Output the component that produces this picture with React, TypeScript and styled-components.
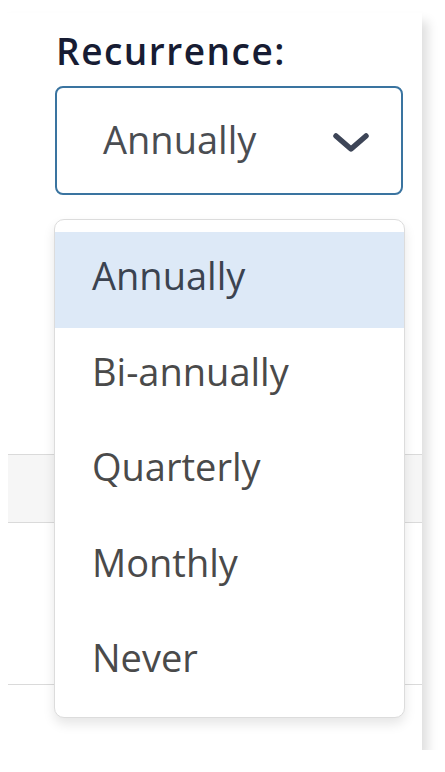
import React from "react";
import styled, { createGlobalStyle } from "styled-components";

const GlobalStyle = createGlobalStyle`
  html, body {
    margin: 0;
    padding: 0;
    background: #ffffff;
  }
  body {
    font-family: "Open Sans", "Noto Sans", sans-serif;
  }
`;

const options = ["Annually", "Bi-annually", "Quarterly", "Monthly", "Never"];

const App: React.FC = () => {
  const selected = "Annually";

  return (
    <>
      <GlobalStyle />
      <Card>
        <Field>
          <Label>Recurrence:</Label>
          <SelectWrap>
            <SelectBox type='button'>
              <span>{selected}</span>
              <Chevron viewBox='0 0 36 20' aria-hidden>
                <polyline points='3,3 18,16 33,3' />
              </Chevron>
            </SelectBox>
            <Menu role='listbox'>
              {options.map((opt) => (
                <MenuItem key={opt} $active={opt === selected}>
                  {opt}
                </MenuItem>
              ))}
            </Menu>
          </SelectWrap>
        </Field>
        <Table>
          <HeaderRow />
          <BodyRow />
        </Table>
      </Card>
    </>
  );
};

const Card = styled.div`
  position: relative;
  width: 422px;
  height: 737px;
  margin-top: 13px;
  background: #ffffff;
  box-shadow: 6px 8px 10px rgba(0, 0, 0, 0.13);
  display: flex;
  flex-direction: column;
`;

const Field = styled.div`
  margin-left: 55px;
  padding-top: 12px;
  display: flex;
  flex-direction: column;
  gap: 9px;
`;

const Label = styled.label`
  font-size: 37px;
  font-weight: 600;
  letter-spacing: 1.5px;
  color: #171c33;
  line-height: 52px;
  padding-left: 1px;
`;

const SelectWrap = styled.div`
  position: relative;
  width: 348px;
`;

const SelectBox = styled.button`
  box-sizing: border-box;
  width: 348px;
  height: 109px;
  display: flex;
  align-items: center;
  justify-content: space-between;
  padding: 0 32px 4px 46px;
  border: 2px solid #3a74a0;
  border-radius: 8px;
  background: #ffffff;
  font-family: "Open Sans", "Noto Sans", sans-serif;
  font-size: 38px;
  color: #4a4d52;
  cursor: pointer;
`;

const Chevron = styled.svg`
  width: 36px;
  height: 20px;
  margin-top: 8px;
  fill: none;
  stroke: #3d4557;
  stroke-width: 5.5;
  stroke-linecap: round;
  stroke-linejoin: round;
`;

const Menu = styled.ul`
  position: absolute;
  top: calc(100% + 24px);
  left: -1px;
  box-sizing: border-box;
  width: 351px;
  height: 499px;
  margin: 0;
  padding: 12px 0 0;
  list-style: none;
  background: #ffffff;
  border: 1px solid #dcdcdc;
  border-radius: 10px;
  box-shadow: 0 6px 12px rgba(0, 0, 0, 0.1);
  overflow: hidden;
  z-index: 5;
`;

const MenuItem = styled.li<{ $active?: boolean }>`
  box-sizing: border-box;
  height: 95.5px;
  display: flex;
  align-items: center;
  padding: 0 0 9px 37px;
  font-size: 38px;
  color: ${(p) => (p.$active ? "#3b4350" : "#4a4a4a")};
  background: ${(p) => (p.$active ? "#dde9f7" : "transparent")};
`;

const Table = styled.div`
  margin-top: 259px;
  margin-left: 8px;
  display: flex;
  flex-direction: column;
`;

const HeaderRow = styled.div`
  height: 67px;
  border-top: 1px solid #dadada;
  border-bottom: 1px solid #dadada;
  background: #f6f6f6;
`;

const BodyRow = styled.div`
  height: 161px;
  border-bottom: 1px solid #dadada;
`;

export default App;
